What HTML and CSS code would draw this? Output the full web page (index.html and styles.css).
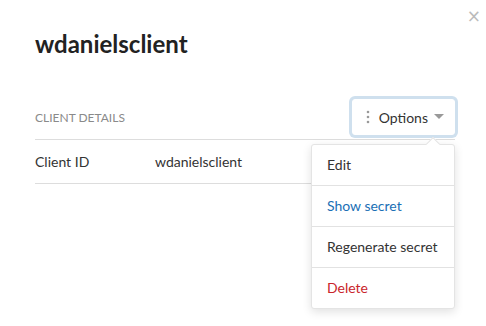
FILE: index.html
```html
<!DOCTYPE html>
<html lang="en">
<head>
  <meta charset="UTF-8">
  <title>Client details</title>
  <link rel="stylesheet" href="styles.css">
</head>
<body>
  <div class="modal">
    <button class="close" aria-label="Close">&times;</button>
    <h1 class="title">wdanielsclient</h1>

    <div class="section-head">
      <span class="section-label">CLIENT DETAILS</span>
      <div class="options">
        <button class="options-btn">
          <svg class="kebab" width="4" height="14" viewBox="0 0 4 14">
            <circle cx="2" cy="2" r="1.3" />
            <circle cx="2" cy="7" r="1.3" />
            <circle cx="2" cy="12" r="1.3" />
          </svg>
          <span>Options</span>
          <svg class="caret" width="10" height="6" viewBox="0 0 10 6"><path d="M0 0h10L5 5z" /></svg>
        </button>
        <div class="menu">
          <div class="menu-item">Edit</div>
          <div class="menu-item link">Show secret</div>
          <div class="menu-item">Regenerate secret</div>
          <div class="menu-item danger">Delete</div>
        </div>
      </div>
    </div>

    <div class="row">
      <span class="row-key">Client ID</span>
      <span class="row-value">wdanielsclient</span>
    </div>
  </div>
</body>
</html>
```

FILE: styles.css
```css
html, body {
  margin: 0;
  background: #fff;
}
body {
  font-family: Lato, "Open Sans", sans-serif;
  color: #333;
}
.modal {
  position: relative;
  box-sizing: border-box;
  min-height: 326px;
  padding: 29px 31px 0 35px;
}
.close {
  position: absolute;
  top: 6px;
  right: 5px;
  border: 0;
  background: none;
  font-size: 17px;
  color: #bbb;
  font-family: "DejaVu Sans", sans-serif;
  padding: 0;
  cursor: pointer;
}
.title {
  margin: 0;
  font-size: 24px;
  font-weight: 700;
  color: #222;
  line-height: 30px;
}
.section-head {
  margin-top: 40px;
  display: flex;
  justify-content: space-between;
  align-items: center;
  border-bottom: 1px solid #ddd;
  padding-bottom: 4px;
}
.section-label {
  font-size: 12px;
  color: #8a8a8a;
}
.options {
  position: relative;
}
.options-btn {
  display: flex;
  align-items: center;
  gap: 9px;
  height: 36px;
  padding: 0 10px 0 13px;
  border: 1px solid #fff;
  border-radius: 3px;
  background: #fff;
  box-shadow: 0 0 0 3px #cfe0ee;
  font-family: inherit;
  font-size: 14px;
  color: #333;
  cursor: pointer;
}
.kebab {
  fill: #999;
}
.caret {
  fill: #999;
  margin-left: -3px;
}
.menu {
  position: absolute;
  top: 45px;
  right: 0;
  width: 142px;
  background: #fff;
  border: 1px solid #e4e4e4;
  border-radius: 3px;
  box-shadow: 0 3px 10px rgba(0, 0, 0, 0.12);
  z-index: 2;
}
.menu::before {
  content: "";
  position: absolute;
  top: -6px;
  right: 16px;
  width: 9px;
  height: 9px;
  background: #fff;
  border-left: 1px solid #e4e4e4;
  border-top: 1px solid #e4e4e4;
  transform: rotate(45deg);
}
.menu-item {
  padding: 0 15px;
  height: 40px;
  line-height: 40px;
  font-size: 14px;
  color: #333;
  border-top: 1px solid #e2e2e2;
}
.menu-item:first-child {
  border-top: 0;
}
.menu-item.link {
  color: #1a6fb5;
}
.menu-item.danger {
  color: #c9252b;
}
.row {
  display: flex;
  align-items: center;
  height: 43px;
  border-bottom: 1px solid #ddd;
  font-size: 14px;
  color: #333;
}
.row-key {
  width: 120px;
}
```
